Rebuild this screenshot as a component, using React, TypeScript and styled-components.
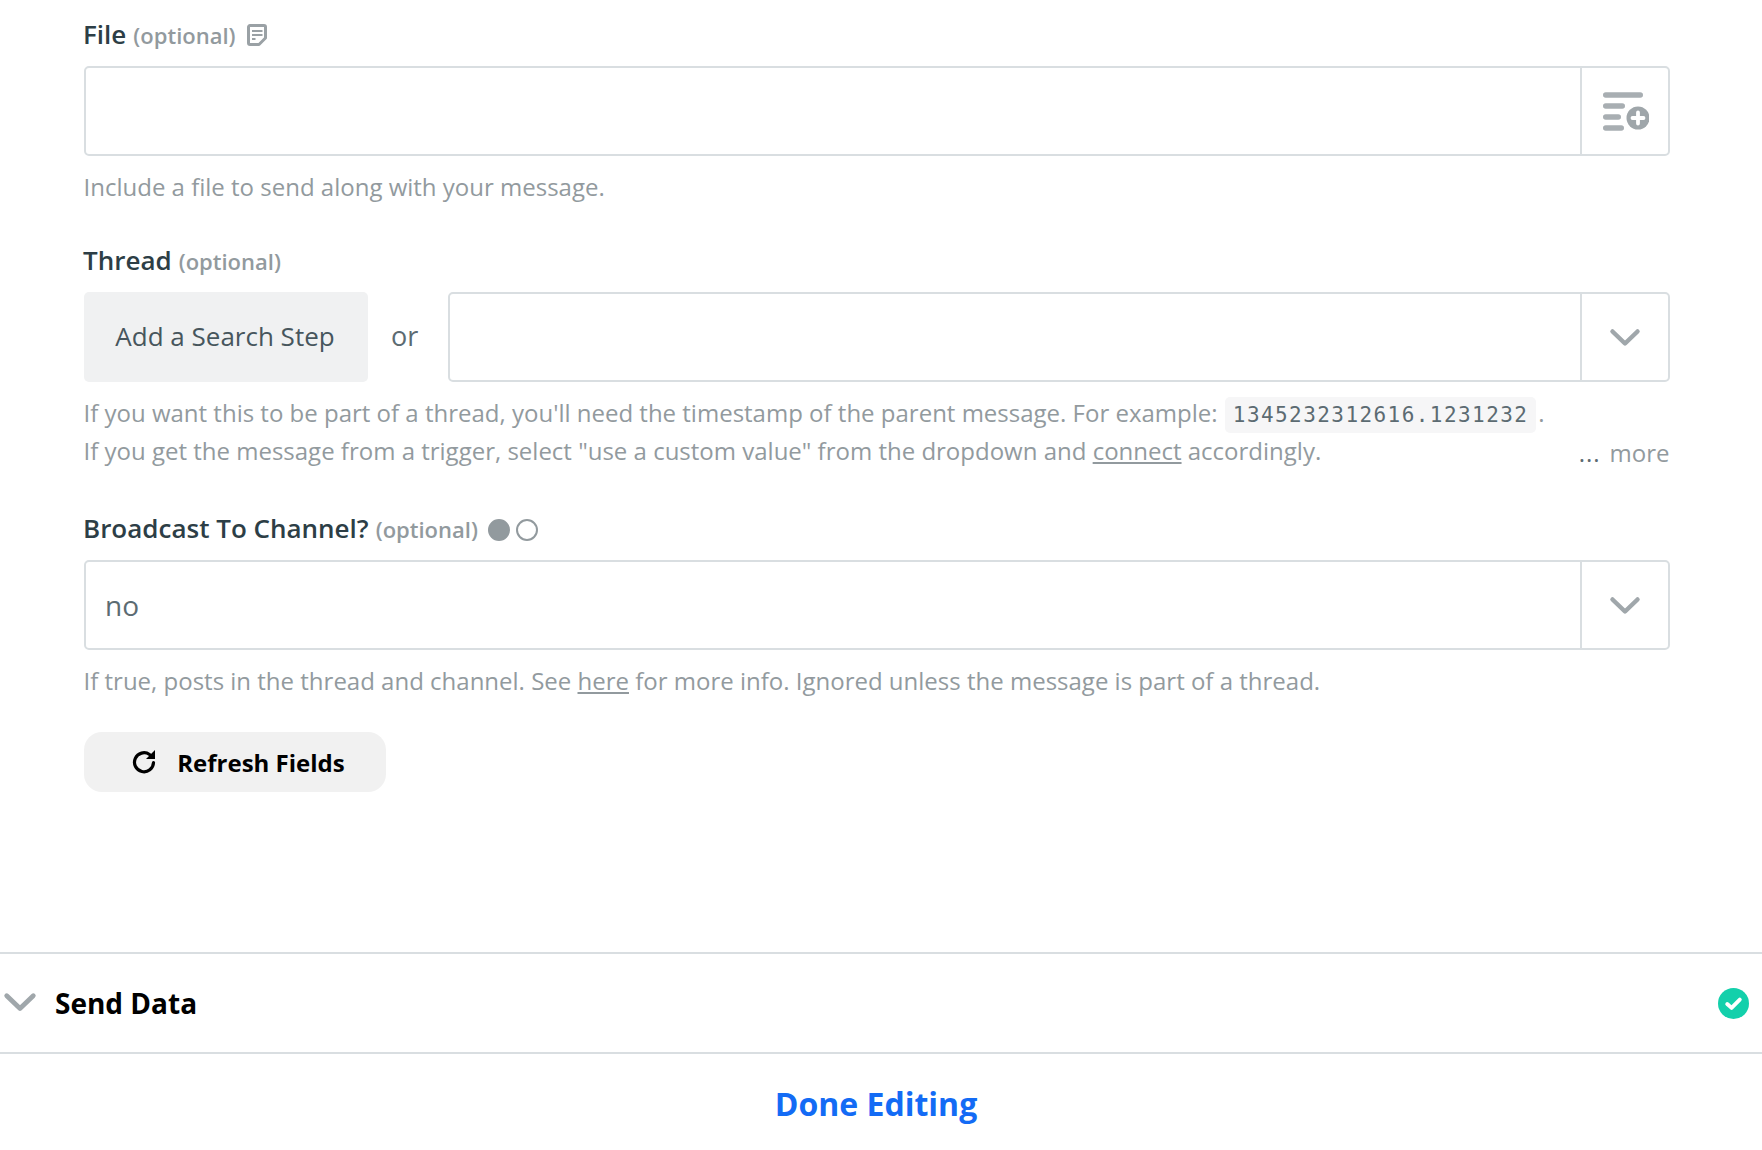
import { createGlobalStyle } from "styled-components";
import styled from "styled-components";

const GlobalStyle = createGlobalStyle`
  html, body {
    margin: 0;
    padding: 0;
    background: #fff;
    font-family: "Open Sans", "Liberation Sans", sans-serif;
  }
`;

const Page = styled.div`
  width: 1762px;
  height: 1150px;
  overflow: hidden;
  display: flex;
  flex-direction: column;
`;

const Form = styled.div`
  height: 952px;
  box-sizing: border-box;
  padding: 16px 92px 0 84px;
`;

const Field = styled.div<{ $gap?: number }>`
  margin-bottom: ${(p) => p.$gap ?? 36}px;
`;

const LabelRow = styled.div`
  display: flex;
  align-items: center;
  height: 36px;
  margin: 0 0 14px -1px;
`;

const LabelName = styled.span`
  font-size: 26px;
  font-weight: 600;
  color: #2d3e46;
`;

const Optional = styled.span`
  font-size: 22px;
  font-weight: 600;
  color: #929a9e;
  margin: 2px 0 0 7px;
`;

const NoteIcon = styled.svg`
  width: 20px;
  height: 22px;
  margin: 2px 0 0 11px;
`;

const RadioDot = styled.span<{ $filled: boolean }>`
  width: 22px;
  height: 22px;
  box-sizing: border-box;
  border-radius: 50%;
  border: 2px solid #929a9e;
  background: ${(p) => (p.$filled ? "#929a9e" : "#fff")};
  margin-top: 4px;
  margin-left: ${(p) => (p.$filled ? "10px" : "6px")};
`;

const InputRow = styled.div`
  display: flex;
  align-items: stretch;
  gap: 23px;
`;

const InputBox = styled.div`
  flex: 1;
  height: 90px;
  box-sizing: border-box;
  display: flex;
  border: 2px solid #d9dee1;
  border-radius: 5px;
`;

const InputValue = styled.div`
  flex: 1;
  display: flex;
  align-items: center;
  padding-left: 19px;
  font-size: 28px;
  color: #5c6b72;
`;

const InputAddon = styled.div<{ $nudge?: boolean }>`
  width: 86px;
  box-sizing: content-box;
  display: flex;
  align-items: center;
  justify-content: center;
  padding-top: ${(p) => (p.$nudge ? "2px" : "0")};
  border-left: 2px solid #d9dee1;
`;

const SearchButton = styled.div`
  width: 284px;
  height: 90px;
  box-sizing: border-box;
  padding: 0 2px 2px 0;
  display: flex;
  align-items: center;
  justify-content: center;
  background: #f0f1f2;
  border-radius: 5px;
  font-size: 26px;
  color: #47565d;
`;

const OrText = styled.div`
  display: flex;
  align-items: center;
  margin-right: 7px;
  padding-bottom: 4px;
  font-size: 27px;
  color: #5c6b72;
`;

const Hint = styled.div<{ $extra?: boolean }>`
  margin: 12px 0 0 -0.5px;
  padding-bottom: ${(p) => (p.$extra ? "4px" : "0")};
  font-size: 24px;
  line-height: 38px;
  color: #929a9e;
  position: relative;

  a {
    color: #929a9e;
    text-decoration: underline;
  }
`;

const Code = styled.code`
  font-family: "DejaVu Sans Mono", "Liberation Mono", monospace;
  font-size: 21px;
  line-height: 1;
  letter-spacing: 1.43px;
  color: #5c6b72;
  background: #f6f6f7;
  border-radius: 5px;
  padding: 6px 8px;
  margin: 0 2px 0 1px;
`;

const More = styled.span`
  position: absolute;
  right: 0.5px;
  bottom: 2px;
  font-size: 24px;
  color: #929a9e;
`;

const Dots = styled.span`
  color: #5c6b72;
  letter-spacing: 1px;
  margin-right: 9px;
`;

const RefreshButton = styled.div`
  width: 302px;
  height: 60px;
  box-sizing: border-box;
  padding-left: 6px;
  display: flex;
  align-items: center;
  justify-content: center;
  gap: 20px;
  background: #f1f1f1;
  border-radius: 18px;
  font-size: 24px;
  font-weight: 700;
  color: #000;
`;

const Section = styled.div`
  height: 102px;
  box-sizing: border-box;
  display: flex;
  align-items: center;
  border-top: 2px solid #d9dee1;
  border-bottom: 2px solid #d9dee1;
  padding: 0 13px 0 3px;
`;

const SectionTitle = styled.div`
  flex: 1;
  margin-left: 18px;
  font-size: 28px;
  font-weight: 700;
  color: #000;
`;

const Footer = styled.div`
  flex: 1;
  display: flex;
  justify-content: center;
  padding: 28px 10px 0 0;
  font-size: 32px;
  font-weight: 700;
  color: #136bf5;
`;

function Chevron({ size = 32 }: { size?: number }) {
  return (
    <svg width={size} height={(size * 20) / 32} viewBox="0 0 32 20" fill="none">
      <path d="M3.500 3.500L16 15.500L28.500 3.500" stroke="#a0a7ab" strokeWidth="4.500" strokeLinecap="round" strokeLinejoin="round" />
    </svg>
  );
}

function App() {
  return (
    <Page>
      <GlobalStyle />
      <Form>
        <Field>
          <LabelRow>
            <LabelName>File</LabelName>
            <Optional>(optional)</Optional>
            <NoteIcon viewBox="0 0 20 22" fill="none">
              <path d="M3 1.500h14a1.500 1.500 0 0 1 1.500 1.500V14l-6.500 6.500H3A1.500 1.500 0 0 1 1.500 19V3A1.500 1.500 0 0 1 3 1.500z" stroke="#9aa1a5" strokeWidth="3" strokeLinejoin="round" />
              <path d="M5 7h10.500M5 11h10.500M5 15h3.500" stroke="#9aa1a5" strokeWidth="2.200" />
            </NoteIcon>
          </LabelRow>
          <InputRow>
            <InputBox>
              <InputValue />
              <InputAddon>
                <svg width="48" height="40" viewBox="0 0 48 40">
                  <g fill="none" stroke="#a8aeb2" strokeWidth="5.500" strokeLinecap="round">
                    <path d="M4.750 4h34.500M4.750 15h16.500M4.750 26h12.500M4.750 37h15.500" />
                  </g>
                  <circle cx="37" cy="27" r="11.500" fill="#9fa6aa" />
                  <path d="M37 21.500v11M31.500 27h11" stroke="#fff" strokeWidth="3.800" strokeLinecap="round" />
                </svg>
              </InputAddon>
            </InputBox>
          </InputRow>
          <Hint>Include a file to send along with your message.</Hint>
        </Field>
        <Field>
          <LabelRow>
            <LabelName>Thread</LabelName>
            <Optional>(optional)</Optional>
          </LabelRow>
          <InputRow>
            <SearchButton>Add a Search Step</SearchButton>
            <OrText>or</OrText>
            <InputBox>
              <InputValue />
              <InputAddon $nudge>
                <Chevron />
              </InputAddon>
            </InputBox>
          </InputRow>
          <Hint $extra>
            If you want this to be part of a thread, you'll need the timestamp of the parent message. For example: <Code>1345232312616.1231232</Code>.
            <br />
            If you get the message from a trigger, select "use a custom value" from the dropdown and <a>connect</a> accordingly.
            <More>
              <Dots>...</Dots>more
            </More>
          </Hint>
        </Field>
        <Field $gap={32}>
          <LabelRow>
            <LabelName>Broadcast To Channel?</LabelName>
            <Optional>(optional)</Optional>
            <RadioDot $filled />
            <RadioDot $filled={false} />
          </LabelRow>
          <InputRow>
            <InputBox>
              <InputValue>no</InputValue>
              <InputAddon $nudge>
                <Chevron />
              </InputAddon>
            </InputBox>
          </InputRow>
          <Hint>
            If true, posts in the thread and channel. See <a>here</a> for more info. Ignored unless the message is part of a thread.
          </Hint>
        </Field>
        <RefreshButton>
          <svg width="26" height="26" viewBox="0 0 26 26" fill="none">
            <path d="M22.500 13.500A9.500 9.500 0 1 1 18.500 5.500" stroke="#000" strokeWidth="3.200" strokeLinecap="round" />
            <path d="M24 1v9h-9z" fill="#000" />
          </svg>
          Refresh Fields
        </RefreshButton>
      </Form>
      <Section>
        <Chevron size={34} />
        <SectionTitle>Send Data</SectionTitle>
        <svg width="31" height="31" viewBox="0 0 32 32">
          <circle cx="16" cy="16" r="16" fill="#13d0ab" />
          <path d="M9.500 16.500l4.500 4 8.500-8.500" fill="none" stroke="#fff" strokeWidth="4" strokeLinecap="round" strokeLinejoin="round" />
        </svg>
      </Section>
      <Footer>Done Editing</Footer>
    </Page>
  );
}

export default App;
